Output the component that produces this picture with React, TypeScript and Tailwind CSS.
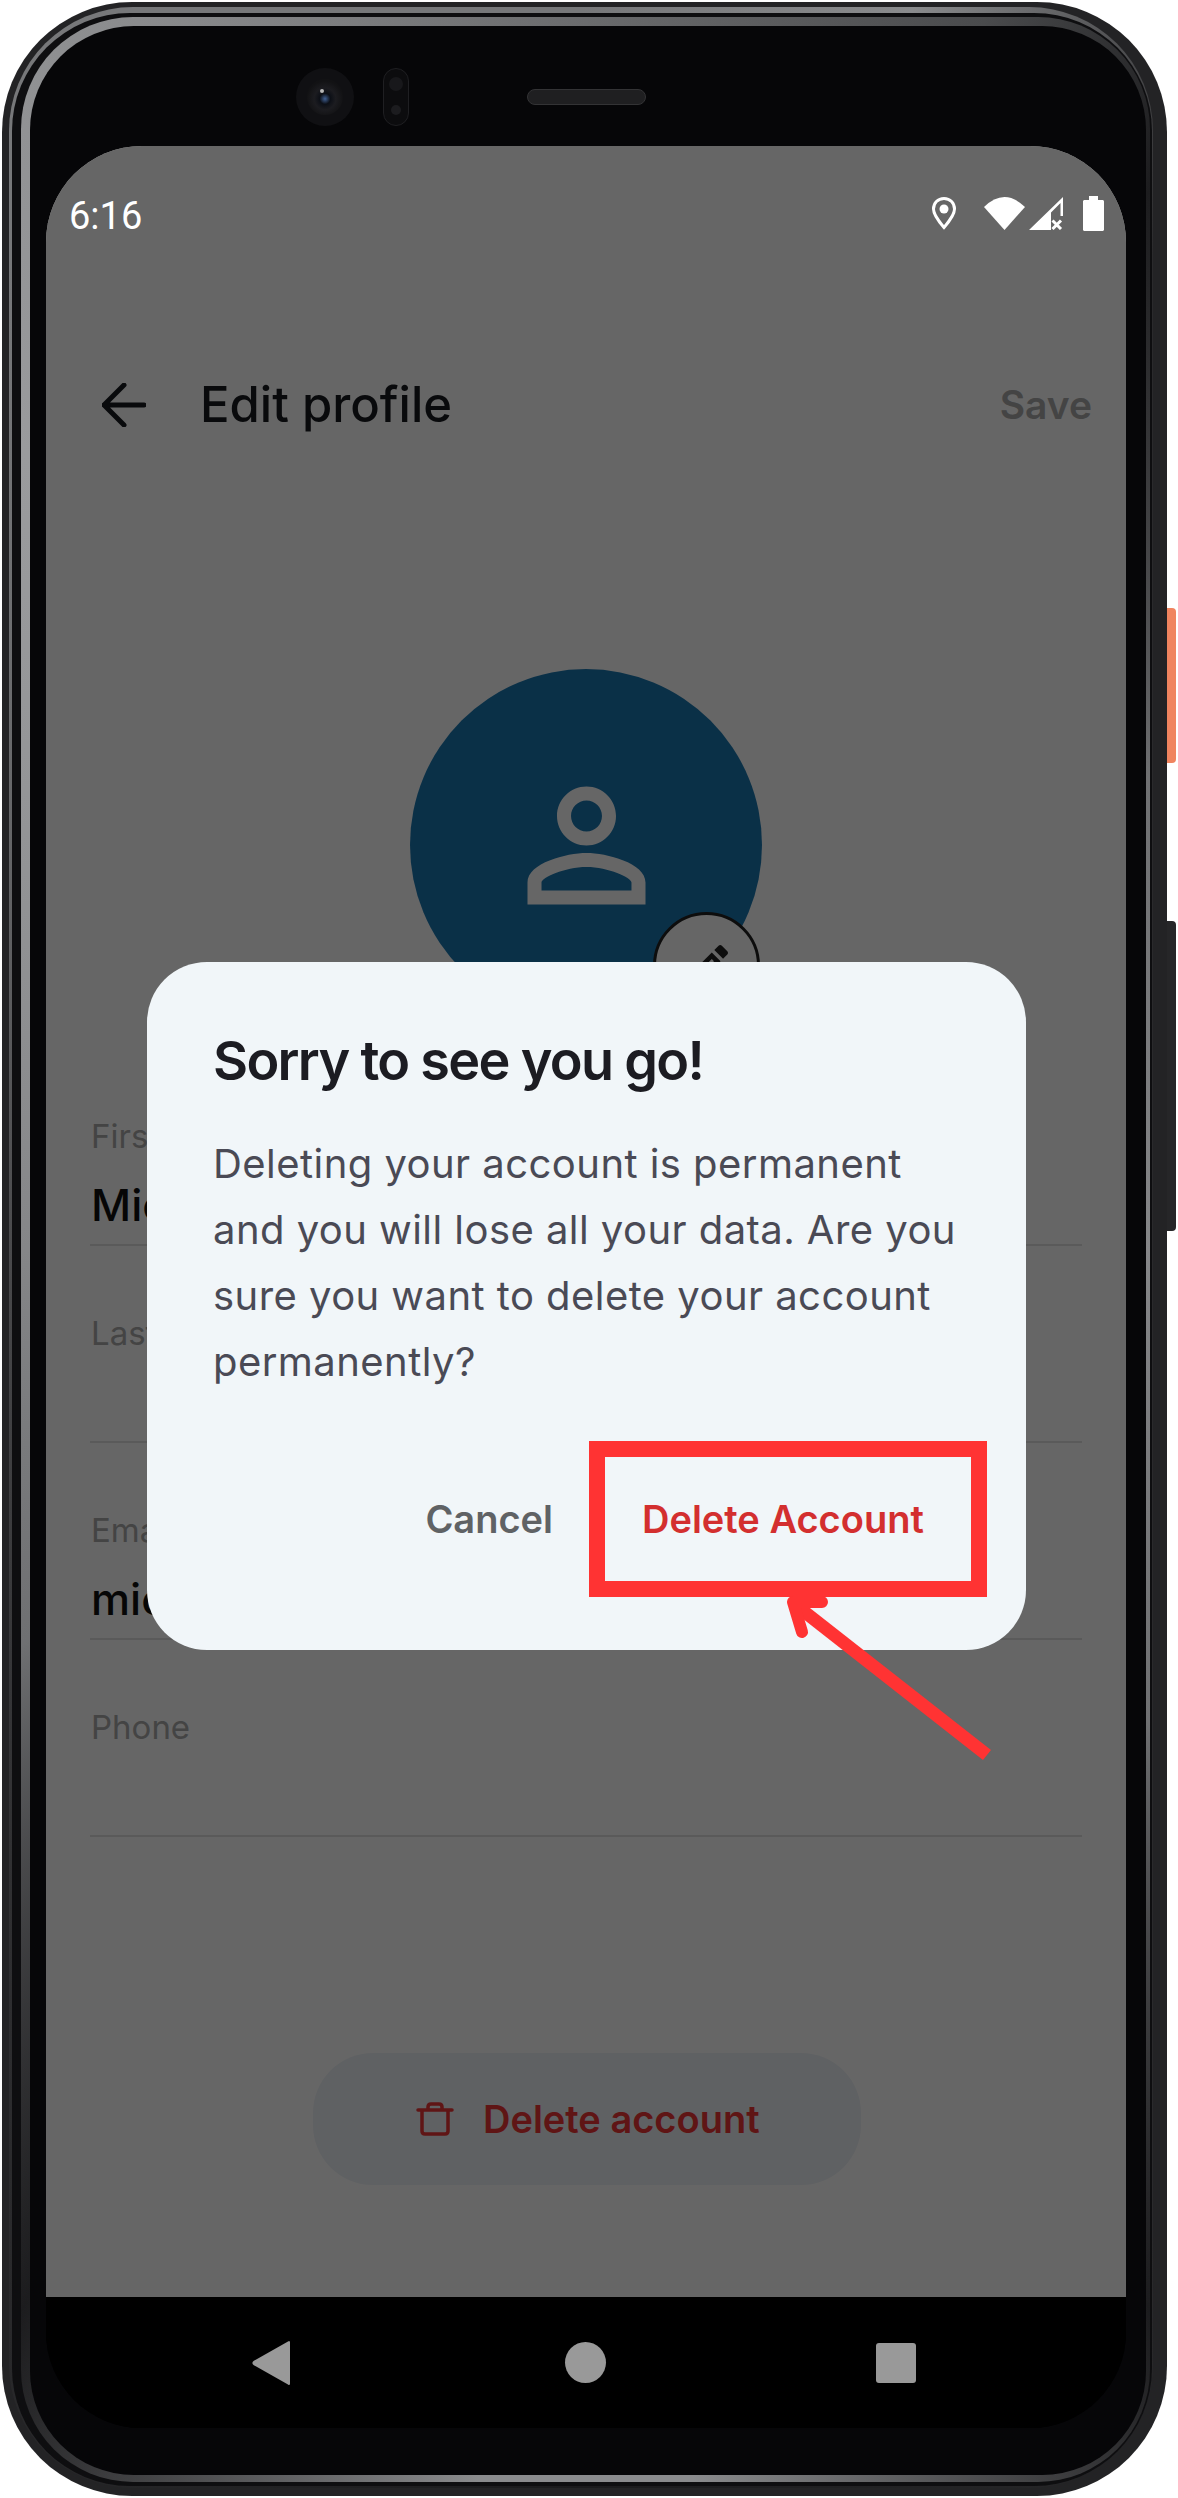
const fields = [
  { label: "First name", value: "Michael" },
  { label: "Last name", value: "" },
  { label: "Email", value: "michael@mail.com" },
  { label: "Phone", value: "" },
];

function StatusIcons() {
  return (
    <div className="flex items-center mb-[6px]">
      <svg width="24" height="33" viewBox="0 0 24 33" className="mr-[28px]">
        <path d="M12 1.5C5.8 1.5 1.5 6.2 1.5 12C1.5 18.5 12 30.5 12 30.5S22.5 18.5 22.5 12C22.5 6.2 18.2 1.5 12 1.5Z" fill="none" stroke="white" strokeWidth="3" />
        <circle cx="12" cy="12" r="4.5" fill="white" />
      </svg>
      <svg width="41" height="33" viewBox="0 0 41 33" className="mr-[4px]">
        <path d="M0 10Q20.5 -10 41 10L20.5 33Z" fill="white" />
      </svg>
      <svg width="34" height="33" viewBox="0 0 34 33" className="mr-[20px]">
        <path d="M0 33L34 0V19H31.5V6L22 15.5V33Z" fill="white" />
        <path d="M23.5 23.5L32 32M32 23.5L23.5 32" stroke="white" strokeWidth="3" fill="none" />
      </svg>
      <svg width="21" height="35" viewBox="0 0 21 35">
        <path d="M6 0H15V4H19.5C20.3 4 21 4.7 21 5.500V33.500C21 34.300 20.300 35 19.500 35H1.500C0.700 35 0 34.300 0 33.500V5.500C0 4.700 0.700 4 1.500 4H6Z" fill="white" />
      </svg>
    </div>
  );
}

function Field({ label, value }: { label: string; value: string }) {
  return (
    <div className="flex h-[197px] flex-col justify-end border-b-2 border-[#e2e2e2] pb-[9px]">
      <div className="mb-[19px] pl-[1px] text-[33px] leading-[40px] text-[#aaaaaa]">{label}</div>
      <div className="h-[60px] pl-[1px] text-[44px] font-medium leading-[60px] text-[#111111]">{value}</div>
    </div>
  );
}

function Dialog() {
  return (
    <div className="absolute left-[101px] top-[816px] z-20 flex h-[688px] w-[879px] flex-col rounded-[60px] bg-[#f1f6f9] pl-[66px] pt-[69px]">
      <h2 className="text-[54px] font-semibold leading-[60px] tracking-[-1.7px] text-[#1c1c22]">Sorry to see you go!</h2>
      <p className="mt-[40px] w-[760px] text-[40px] leading-[66px] tracking-[0.45px] text-[#4a4a55]">
        Deleting your account is permanent and you will lose all your data. Are you sure you want to delete your account
        permanently?
      </p>
      <div className="mt-[46px] flex items-center justify-end pr-[39px]">
        <span className="mr-[36px] text-[38px] font-semibold text-[#5f6265]">Cancel</span>
        <div className="flex h-[156px] w-[398px] items-center border-[16px] border-[#ff3333] pl-[37px] text-[38px] font-semibold text-[#d32f2f]">
          Delete Account
        </div>
      </div>
      <svg width="240" height="200" viewBox="0 0 240 200" className="absolute left-[620px] top-[620px]" fill="none">
        <path d="M220 173L30 24" stroke="#ff3333" strokeWidth="13" />
        <path d="M55 20H26L35 50" stroke="#ff3333" strokeWidth="12" strokeLinecap="round" strokeLinejoin="round" />
      </svg>
    </div>
  );
}

export default function App() {
  return (
    <div className="flex h-[2498px] w-[1178px] items-start bg-white pl-[2px] pt-[2px] font-[Inter,sans-serif]">
      <div className="h-[2494px] w-[1165px] rounded-[130px] bg-[#232325] pb-[8px] pl-[7px] pr-[14px] pt-[5px]">
        <div className="h-full rounded-[124px] bg-[conic-gradient(#77787a_0deg,#8a8b8d_15deg,#2a2a2c_30deg,#2a2a2c_150deg,#1a1a1c_180deg,#2a2a2c_210deg,#4a4a4c_270deg,#77787a_330deg,#77787a_360deg)] pb-[2px] pl-[3px] pr-[1px] pt-[6px]">
          <div className="h-full rounded-[118px] bg-[#0e0e10] pb-[4px] pl-[9px] pr-[2px] pt-[4px]">
            <div className="h-full rounded-[112px] bg-[conic-gradient(#6a6b6d_0deg,#4a4b4d_18deg,#1c1c1e_28deg,#6f7072_50deg,#858688_90deg,#6f7072_130deg,#1c1c1e_152deg,#8a8b8d_175deg,#8a8b8d_185deg,#1c1c1e_208deg,#6f7072_235deg,#858688_270deg,#9a9b9d_325deg,#8a8b8d_340deg,#6a6b6d_360deg)] pb-[7px] pl-[9px] pr-[4px] pt-[9px]">
              <div className="flex h-full flex-col rounded-[104px] bg-[#060608] pb-[47px] pl-[16px] pr-[20px]">
                {/* camera row */}
                <div className="flex h-[120px] shrink-0 items-center pl-[250px] pt-[22px]">
                  <svg width="58" height="58" viewBox="0 0 58 58" className="mr-[29px]">
                    <defs>
                      <radialGradient id="lens" cx="50%" cy="55%" r="50%">
                        <stop offset="0%" stopColor="#3f5f92" />
                        <stop offset="30%" stopColor="#0c0f16" />
                        <stop offset="60%" stopColor="#1c1c20" />
                        <stop offset="100%" stopColor="#121214" />
                      </radialGradient>
                    </defs>
                    <circle cx="29" cy="29" r="29" fill="#101013" />
                    <circle cx="29" cy="29" r="18" fill="url(#lens)" />
                    <circle cx="26" cy="23" r="2" fill="#b8b8b8" />
                  </svg>
                  <svg width="26" height="58" viewBox="0 0 26 58" className="mr-[118px]">
                    <rect x="0.500" y="0.500" width="25" height="57" rx="12.500" fill="#0c0c0e" stroke="#1f1f22" />
                    <circle cx="13" cy="16" r="7" fill="#18181b" />
                    <circle cx="13" cy="42" r="5" fill="#1c1c1f" />
                  </svg>
                  <div className="h-[16px] w-[119px] rounded-full border border-[#333335] bg-[#1f1f21]" />
                </div>

                {/* screen */}
                <div className="flex min-h-0 flex-1 flex-col overflow-hidden rounded-[96px] bg-black">
                  <div className="relative flex min-h-0 flex-1 flex-col bg-white">
                    <div className="absolute inset-0 z-10 bg-black/60" />
                    <div className="relative z-20 flex h-[140px] shrink-0 items-center justify-between pl-[23px] pr-[22px] font-[Roboto,sans-serif] text-[38px] text-white">
                      <span>6:16</span>
                      <StatusIcons />
                    </div>

                    <div className="flex h-[238px] shrink-0 items-center pl-[56px] pr-[34px]">
                      <svg width="44" height="44" viewBox="0 0 44 44" fill="none" className="mr-[54px]">
                        <path d="M2 22H42M22 2L2 22L22 42" stroke="#181a1f" strokeWidth="5" strokeLinecap="round" strokeLinejoin="round" />
                      </svg>
                      <span className="flex-1 text-[49px] font-medium text-[#181a1f]">Edit profile</span>
                      <span className="text-[39px] font-semibold text-[#aaaaaa]">Save</span>
                    </div>

                    <div className="relative ml-[364px] mt-[145px] flex h-[352px] w-[352px] shrink-0 items-center justify-center rounded-full bg-[#1b78b2]">
                      <svg width="177" height="177" viewBox="0 0 24 24" fill="white">
                        <path d="M12 5.900c1.160 0 2.100.940 2.100 2.100s-.940 2.100-2.100 2.100S9.900 9.160 9.900 8s.940-2.100 2.100-2.100m0 9c2.970 0 6.100 1.460 6.100 2.100v1.100H5.900V17c0-.640 3.130-2.100 6.100-2.100M12 4C9.790 4 8 5.790 8 8s1.790 4 4 4 4-1.790 4-4-1.790-4-4-4zm0 9c-2.670 0-8 1.340-8 4v3h16v-3c0-2.660-5.330-4-8-4z" />
                      </svg>
                      <div className="absolute left-[243px] top-[243px] flex h-[107px] w-[107px] items-center justify-center rounded-full border-[3px] border-[#222222] bg-white">
                        <svg width="56" height="56" viewBox="0 0 24 24" fill="#222222">
                          <path d="M14.060 9.020l.920.920L5.920 19H5v-.920l9.060-9.060M17.660 3c-.250 0-.510.100-.700.290l-1.830 1.830 3.750 3.750 1.830-1.830c.390-.390.390-1.020 0-1.410l-2.340-2.340c-.200-.200-.450-.290-.710-.290zm-3.600 3.190L3 17.250V21h3.750L17.810 9.940l-3.750-3.750z" />
                        </svg>
                      </div>
                    </div>

                    <div className="mt-[28px] shrink-0 px-[44px]">
                      {fields.map((f) => (
                        <Field key={f.label} label={f.label} value={f.value} />
                      ))}
                    </div>

                    <div className="ml-[267px] mt-[216px] flex h-[132px] w-[548px] shrink-0 items-center rounded-[60px] bg-[#eef2f7] pl-[103px] text-[38px] font-semibold text-[#ee3535]">
                      <svg width="38" height="34" viewBox="0 0 38 34" fill="none" className="mr-[29px]" stroke="#ee3535" strokeWidth="3.500" strokeLinejoin="round" strokeLinecap="round">
                        <path d="M2 8H36M12 8V5C12 3 13 2 15 2H23C25 2 26 3 26 5V8M6 8V29C6 31 7 32 9 32H29C31 32 32 31 32 29V8" />
                      </svg>
                      Delete account
                    </div>

                    <Dialog />
                  </div>

                  {/* android nav bar */}
                  <div className="flex h-[131px] shrink-0 items-center bg-black pl-[206px]">
                    <svg width="38" height="46" viewBox="0 0 38 46" className="mr-[275px]">
                      <path d="M36 1.500L1.500 21C0 22 0 24 1.500 25L36 44.500C37 45.500 38 45 38 43.500V2.500C38 1 37 .500 36 1.500Z" fill="#999999" />
                    </svg>
                    <div className="mr-[270px] h-[41px] w-[41px] rounded-full bg-[#999999]" />
                    <div className="h-[40px] w-[40px] rounded-[3px] bg-[#999999]" />
                  </div>
                </div>
              </div>
            </div>
          </div>
        </div>
      </div>

      {/* side buttons */}
      <div className="flex w-[9px] flex-col pt-[606px]">
        <div className="h-[155px] rounded-r-[4px] bg-[#f0845f]" />
        <div className="mt-[158px] h-[310px] rounded-r-[4px] bg-[#262628]" />
      </div>
    </div>
  );
}
